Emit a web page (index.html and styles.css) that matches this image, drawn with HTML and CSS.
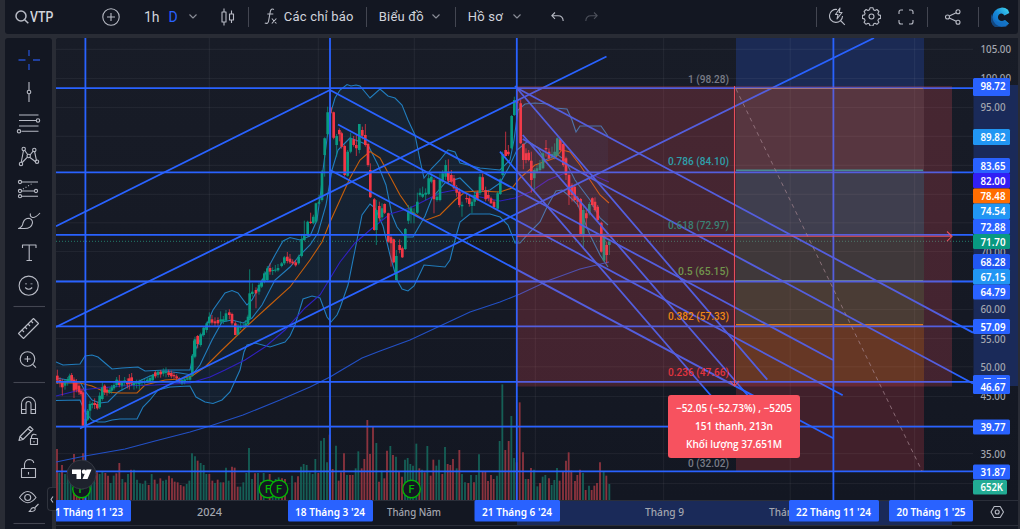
FILE: index.html
```html
<!DOCTYPE html>
<html lang="vi">
<head>
<meta charset="utf-8">
<title>VTP</title>
<link rel="stylesheet" href="styles.css">
</head>
<body>
<div class="app">
  <header class="topbar">
    <div class="symbol">
      <svg class="ic" width="14" height="14" viewBox="0 0 14 14"><circle cx="6" cy="6" r="5"/><path d="M9.7 9.700l3.600 3.600"/></svg>
      <span class="ticker">VTP</span>
    </div>
    <svg class="ic add" width="18" height="18" viewBox="0 0 18 18"><circle cx="9" cy="9" r="8.200"/><path d="M9 5v8M5 9h8"/></svg>
    <span class="interval">1h</span><span class="interval on">D</span>
    <svg class="ic chev c1" width="8" height="5" viewBox="0 0 8 5"><path d="M.5.5 4 4 7.500.5"/></svg>
    <svg class="ic candles" width="14" height="18" viewBox="0 0 14 18"><path d="M1 4h4v10H1zM3 4V0.500M3 14v3.500M8.500 6h4v6h-4zM10.500 6V2.500M10.500 12v3"/></svg>
    <i class="sep"></i>
    <svg class="ic fx" width="13" height="17" viewBox="0 0 13 17"><path d="M10 1.500Q7 0 6.300 3.500L4.600 13Q4 16.300.8 15M3.300 6h6M7.800 10.500l4.600 5M12.400 10.500l-4.600 5"/></svg>
    <span class="label l1">Các chỉ báo</span>
    <i class="sep s2"></i>
    <span class="label l2">Biểu đồ</span>
    <svg class="ic chev c2" width="8" height="5" viewBox="0 0 8 5"><path d="M.5.5 4 4 7.500.5"/></svg>
    <i class="sep s3"></i>
    <span class="label l3">Hồ sơ</span>
    <svg class="ic chev c3" width="8" height="5" viewBox="0 0 8 5"><path d="M.5.5 4 4 7.500.5"/></svg>
    <svg class="ic undo" width="13" height="10" viewBox="0 0 13 10"><path d="M4 .5.800 3.700 4 6.900M1 3.700h6q5 0 5.200 5.300"/></svg>
    <svg class="ic redo" width="13" height="10" viewBox="0 0 13 10"><path d="M9 .5l3.200 3.200L9 6.900M12 3.700H6Q1 3.700.8 9"/></svg>
    <div class="right">
      <i class="sep"></i>
      <svg class="ic r1" width="17" height="19" viewBox="0 0 17 19"><path d="M8 2.500A6.500 6.500 0 1 0 13.500 9M11.500 13.500l4.300 4.300M11 1 6.500 7.500H9L8 12l5-6.500h-2.800z"/></svg>
      <svg class="ic r2" width="19" height="19" viewBox="0 0 19 19"><circle cx="9.500" cy="9.500" r="2.500"/><path d="M8 .8h3l.5 2 1.500.7 1.900-1 2 2-1 1.900.7 1.500 2 .5v3l-2 .5-.7 1.500 1 1.900-2 2-1.900-1-1.500.7-.5 2H8l-.5-2-1.500-.7-1.900 1-2-2 1-1.900-.7-1.500-2-.5v-3l2-.5.7-1.500-1-1.900 2-2 1.900 1 1.500-.7z"/></svg>
      <svg class="ic r3" width="16" height="16" viewBox="0 0 16 16"><path d="M1 5V3q0-2 2-2h2M11 1h2q2 0 2 2v2M15 11v2q0 2-2 2h-2M5 15H3q-2 0-2-2v-2"/></svg>
      <i class="sep s4"></i>
      <svg class="ic r4" width="16" height="16" viewBox="0 0 16 16"><circle cx="2.500" cy="8" r="2"/><circle cx="13" cy="2.800" r="2"/><circle cx="13" cy="13.200" r="2"/><path d="M4.300 7.100l6.900-3.400M4.300 8.900l6.900 3.400"/></svg>
      <i class="sep s5"></i>
      <svg class="logo" width="19" height="20" viewBox="0 0 19 20"><defs><linearGradient id="lg" x1="0" y1="1" x2="1" y2="0"><stop offset="0" stop-color="#1260b8"/><stop offset=".5" stop-color="#1689d8"/><stop offset="1" stop-color="#43dcf0"/></linearGradient></defs><path d="M17 2.800A9.500 9.500 0 1 0 18 16.500L14 13Q10.500 15.300 7.800 12.800 6 10 8 7.500 11 5.300 13.500 8.500L18.300 6z" fill="url(#lg)"/><path d="M1 7Q2 14 8.500 15l5.500-1.800 3.500 3.800A9.500 9.500 0 0 1 1 7z" fill="#1467bd" opacity=".6"/></svg>
    </div>
  </header>
  <div class="body">
    <nav class="tools">
      <svg viewBox="0 0 47 491" width="47" height="491">
        <g class="cross"><path d="M24 12v6M24 26v6M13.500 22h7M28 22h7"/></g>
        <g class="ic">
          <path d="M24 44v8M24 56v8"/><circle cx="24" cy="54" r="1.800"/>
          <path d="M14 77h19.500M14 82.500h17M14 88h19.500M16.500 93.300h17"/><circle cx="33" cy="82.500" r="1.700"/><circle cx="14" cy="93.300" r="1.700"/>
          <path d="M18.400 113 16.300 124M19.800 112.500l3 4.300M25 117l3.200-3.800M29.500 113.200l2.100 10M17.200 124.500l5-5.200M25 119.500l5.500 4.300"/><circle cx="18.700" cy="111" r="1.700"/><circle cx="29.300" cy="112" r="1.700"/><circle cx="23.700" cy="118" r="1.700"/><circle cx="16" cy="126" r="1.700"/><circle cx="32" cy="123.700" r="1.700"/>
          <path d="M17 144h16M17 153h12M17 158.200h16"/><path d="M18 151l10-6" stroke-dasharray="1 2"/><circle cx="15" cy="144" r="1.600"/><circle cx="15" cy="153" r="1.600"/><circle cx="31" cy="153" r="1.600"/><circle cx="15" cy="158.200" r="1.600"/>
          <path d="M13.500 190.500q4-1.500 4.500-5.500 1.500-4.700 6-4.700 3.500 1 3.500 4.500-1 5.700-8 5.700zM25.500 175.500q-1 3 2 4 3 .5 7.500-4.500"/>
          <path d="M17.500 210v-3h13.500v3M24.200 207v15.500M21.500 222.500h5.500"/>
          <circle cx="23.700" cy="247.700" r="9.600"/><path d="M20.200 249.500q3.500 3.500 7 0"/><path d="M21 245.500v.8M26.500 245.500v.8" stroke-width="2"/>
          <path d="M8.500 268.500h31.500" class="rule"/>
          <path d="M13.500 295.500 28.500 280.500l5 5-15 15zM17 292l2 2M20 289l2 2M23 286l2 2M26 283l2 2"/>
          <circle cx="22.500" cy="321" r="7.300"/><path d="M22.500 318v6M19.500 321h6M27.700 326.300l3.300 3.300"/>
          <path d="M8.500 344.500h31.500" class="rule"/>
          <path d="M16.500 375.500v-9.500a7 7 0 0 1 14 0v9.500h-4.500v-9.500a2.500 2.500 0 0 0-5 0v9.500zM16.500 371.500h4.500M26 371.500h4.500"/>
          <path d="M14 402.500l1-4 10-10 3 3-10 10zM23 390.500l3 3M15 398.500l3 3M25.500 400.500h7v6h-7zM26.500 400.500v-2q1-3.500 5-1.500M29 403v1.500"/>
          <path d="M16.500 430.500h14v9h-14zM19.500 430v-4q1-4.500 5-4.500 4 .5 4.200 3.500M23.500 434v2.500"/>
          <path d="M14.500 459.500q8-12 16.500 0-8 10.500-16.500 0z"/><circle cx="22.700" cy="459.500" r="3"/><path d="M24 473.500q2-1 2.300-3 3-2 4 .5-.5 3-6.300 2.500zM30 469.500l3.500-3.500"/>
          <path d="M8.500 485.500h31.500" class="rule"/>
        </g>
      </svg>
    </nav>
    <main class="chart">
      <svg id="plot" width="962" height="491" viewBox="56 38 962 491">
        <defs>
          <linearGradient id="bg" x1="0" y1="0" x2="0" y2="1"><stop offset="0" stop-color="#181c27"/><stop offset="1" stop-color="#131722"/></linearGradient>
          <clipPath id="pane"><rect x="56" y="38" width="917" height="462"/></clipPath>
        </defs>
        <rect x="56" y="38" width="962" height="462" fill="url(#bg)"/>
        <g clip-path="url(#pane)">
          <g class="zones">
            <rect x="736" y="38" width="188" height="50" fill="#1b2a54"/>
            <rect x="736" y="88" width="188" height="82" fill="#2d3038"/>
            <rect x="736" y="170" width="188" height="65.500" fill="#0f3a4a"/>
            <rect x="736" y="235.500" width="188" height="45" fill="#0f3231"/>
            <rect x="736" y="280.500" width="188" height="44" fill="#1d372a"/>
            <rect x="736" y="324.500" width="188" height="57" fill="#403116"/>
            <rect x="736" y="381.500" width="188" height="90" fill="#41202b"/>
          </g>
          <g id="grid" class="grid"></g>
          <path d="M736 170.300h187" stroke="#1d9a9a" stroke-width="1.500"/><path d="M736 280.500h187" stroke="#5ba356"/><path d="M736 324.800h187" stroke="#d88400" stroke-width="1.600"/>
          <g id="volume" class="volume" transform="scale(.33333)"></g>
          <g id="bands" class="bands"></g>
          <g id="bars" transform="scale(.33333)"></g>
          <path class="last" d="M56 241.300H973"/>
          <g class="draw">
            <path d="M56 88.200H973M56 172.300H973M56 234.800H973M56 281.500H973M56 326.300H973M56 381.800H973M56 426.600H973M56 471.400H973"/>
            <path d="M85.400 38V500M330 38V500M516.800 38V500M833.400 38V500"/>
            <path d="M56 226.300 330 90M56 327 606.500 56.500M80 428.500 874 38"/>
            <path d="M330 90 833 360M338 124.500 842.700 395.300M330 170 833.300 438.300M517 88 973 332.600M522.700 139 591.700 178.500 973 383.500"/>
            <path d="M515 86 767.300 379.700M522.700 135 750 398M500 151.700 713 398"/>
          </g>
          <path d="M736 88.500H923" stroke="#8b818d"/>
          <rect class="range" x="517" y="86" width="435" height="300.500"/>
          <path class="diag" d="M736 89 922 471"/>
          <g class="arrows"><path d="M517 236.300H951M947 231.500l5 4.800-5 4.800M734.500 86V385M730 381l4.500 5 4.500-5"/></g>
          <g class="ev">
            <circle cx="81.500" cy="489" r="8.800"/><circle cx="268" cy="489" r="8.800"/><text x="81.500" y="493">F</text><text x="268" y="493">F</text>
            <circle cx="279" cy="489" r="8.800"/><circle cx="411.500" cy="489" r="8.800"/><text x="279" y="493">F</text><text x="411.500" y="493">F</text>
          </g>
          <circle cx="81.500" cy="474.500" r="14.500" fill="#1e222d" stroke="#353944"/>
          <path d="M72 469.500h9v9.500h-4.500v-5H72zM86.500 469.500h5l-4 9.500h-5z" fill="#fff"/><circle cx="84" cy="471.700" r="2.200" fill="#fff"/>
        </g>
        <g id="fib" class="fib"></g>
        <g class="tip"><rect x="668" y="395" width="132" height="63" rx="3"/>
          <text x="734" y="412" textLength="116" lengthAdjust="spacingAndGlyphs">−52.05 (−52.73%) , −5205</text>
          <text x="734" y="430" textLength="78" lengthAdjust="spacingAndGlyphs">151 thanh, 213n</text>
          <text x="734" y="448" textLength="96" lengthAdjust="spacingAndGlyphs">Khối lượng 37.651M</text></g>
        <rect x="56" y="500" width="962" height="29" fill="#131722"/>
        <rect x="517" y="501" width="435" height="24" fill="#1a2a59"/>
        <rect x="973.500" y="85" width="44.500" height="301" fill="#1a2a59"/>
        <path d="M56 500.500H1018M56 525.500H1018" stroke="#2a2e39"/>
        <g id="axes" class="axes"></g>
        <g class="ic"><path d="M991 512l3.200-5.500h6l3.300 5.500-3.300 5.500h-6z"/><circle cx="997.200" cy="512" r="2"/></g>
      </svg>
    </main>
    <div class="collapse"><svg class="ic" width="4" height="7" viewBox="0 0 4 7"><path d="M3 .5 1 3.500l2 3"/></svg></div>
  </div>
</div>
<script src="chart.js"></script>
</body>
</html>
```

FILE: styles.css
```css
* { box-sizing: border-box; }
body { margin: 0; background: #292c35; font-family: Roboto, "Open Sans", sans-serif; overflow: hidden; }
.app { width: 1020px; height: 529px; padding: 0 2px 0 5px; display: flex; flex-direction: column; gap: 4px; }
.topbar { height: 34px; flex: none; background: #131722; border-radius: 0 0 3px 3px; display: flex; align-items: center; padding: 0 8px 1px 10px; color: #d1d4dc; font-size: 13px; }
.topbar svg { flex: none; }
.ic { fill: none; stroke: #b8bbc5; stroke-width: 1.1; stroke-linejoin: round; }
.symbol { display: flex; align-items: center; gap: 1px; width: 87px; }
.symbol .ic { stroke-width: 1.5; }
.ticker { font-size: 14px; font-weight: 500; transform: scaleX(.88); transform-origin: left; }
.interval { margin-left: 24px; font-size: 14px; line-height: 16px; }
.interval + .interval { margin-left: 9px; }
.on { color: #2962ff; }
.chev { stroke: #8b8e98; }
.c1 { margin-left: 11px; }
.candles { margin-left: 24px; }
.sep { width: 1px; height: 20px; background: #434651; flex: none; margin-left: 13px; }
.fx { margin-left: 15px; }
.label { white-space: nowrap; font-size: 13px; letter-spacing: .2px; line-height: 18px; }
.l1 { width: 70px; margin-left: 7px; }
.l2 { width: 45px; margin-left: 12px; }
.l3 { width: 36px; margin-left: 12px; }
.s2 { margin-left: 12px; }
.c2 { margin-left: 8px; }
.c3 { margin-left: 9px; }
.s3 { margin-left: 15px; }
.undo { margin-left: 30px; }
.redo { margin-left: 21px; opacity: .35; }
.right { margin-left: auto; display: flex; align-items: center; }
.r1 { margin-left: 12px; }
.r2 { margin-left: 16px; }
.r3 { margin-left: 17px; }
.r4 { margin-left: 17px; }
.s5 { margin-left: 17px; }
.logo { margin-left: 12px; }
.body { flex: 1; display: flex; gap: 4px; position: relative; min-height: 0; }
.tools { width: 47px; background: #131722; border-radius: 3px 3px 0 0; flex: none; }
.tools svg, .chart svg { display: block; }
.cross { stroke: #20409f; stroke-width: 1.8; }
.rule { stroke: #434651; }
.chart { width: 962px; flex: none; background: #131722; border-radius: 3px 0 0 0; overflow: hidden; }
.collapse { position: absolute; left: 42px; top: 449px; width: 9px; height: 24px; border-radius: 4px 0 0 4px; background: #131722; border: 1px solid #2f333d; border-right: 0; display: flex; align-items: center; padding-left: 2px; }
.grid { stroke: #fff; stroke-opacity: .06; }
.volume { stroke-width: 5.5; fill: none; }
.bands { fill: none; stroke-width: 1.1; }
.last { stroke: #26957f; stroke-dasharray: 1 2; opacity: .8; }
.draw { fill: none; stroke: #2962ff; stroke-width: 1.8; }
.range { fill: #f7525f; fill-opacity: .21; }
.diag { stroke: #a78791; stroke-opacity: .7; stroke-dasharray: 4 4; }
.arrows { fill: none; stroke: #f7525f; stroke-width: 1.1; opacity: .9; }
.ev circle { fill: #131722; stroke: #04b404; stroke-width: 1.4; }
.ev text { fill: #04b404; font: 500 11px Roboto, sans-serif; text-anchor: middle; }
.fib text { font: 500 11.5px Roboto, sans-serif; text-anchor: end; }
.tip rect { fill: #f7525f; }
.tip text { fill: #fff; font: 600 11px "Open Sans", Roboto, sans-serif; text-anchor: middle; }
.axes text { font: 500 11.5px "Noto Sans", Roboto, sans-serif; fill: #a3a6af; }
.axes .tag { fill: #fff; font-weight: 600; }
```

FILE: chart.js
```js
const $ = id => document.getElementById(id);
const UP = '#089981', DOWN = '#f23645';

let g = '';
[49.3,78.4,107.4,136.3,165.3,194.3,222.8,251.4,280.5,309.4,338.4,366.8,396.4,425.4,453.7,483.4].forEach(y => g += `<path d="M56 ${y}H973"/>`);
[209.3,318.3,414.3,535.3,663.7,790.2,914.7].forEach(x => g += `<path d="M${x} 38V500"/>`);
$('grid').innerHTML = g;

// volume columns: x:top with side flag, in thirds of a pixel
const vol = [[0, `171:300r 178:372g 186:348r 195:375g 203:380g 212:375g 222:315r 230:380r 238:375r 249:313r 257:340g 266:365g 274:370g 283:372g 291:370r 299:375g 307:368g 316:372r 324:380r 332:402g 341:380g 349:373r 358:342r 367:390g 376:400r 384:375g 393:362r 402:362g 411:392g 420:403g 428:405g 436:395g 446:408r 455:375g 464:392r 472:405g 481:388r 489:395g 498:392g 507:380r 516:388r 524:398r 533:400r 542:408r 551:412r 560:405g 568:395g 576:313g 585:322g 593:335r 602:342g 611:348g 619:375g 628:375r 637:395r 645:402g 653:392r 662:400g 670:400r 678:356g 686:395g 696:353r 704:356r 713:413r 721:413g 730:400g 739:372g 747:297g 756:390g 765:373r 774:372g 783:400r 791:372g 809:375r 818:400g 827:390g 836:385g 846:388r 855:390r 876:380g 886:400r 894:382r 903:353g 911:345g 920:348g 929:370g 938:375g 946:330g 955:372r 963:275g 972:267g 981:340g 989:257r 998:360r 1008:290g 1016:395r`],
[1020, `3:370r 12:313r 21:378g 30:378r 38:378r 47:358g 55:307g 65:358r 73:330r 82:213r 90:315r 99:233r 109:282g 117:398r 125:365g 133:388r 141:305r 151:291g 159:318r 168:323g 177:367r 186:383r 195:332g 203:327g 211:345g 219:350g 229:284g 238:358r 246:362g 254:370r 262:291g 272:380r 280:332r 289:350g 297:332g 307:375r 315:294g 323:345r 331:348r 339:330r 350:358g 358:303r 366:375g 375:400g 385:402r 393:378g 402:400r 409:378g 417:316g 428:367r 436:367r 444:396r 453:378r 461:390r 471:380g 479:276g 487:106g 496:303r 506:276r 514:201g 522:327g 530:340r 539:160r 549:310r 557:390g 565:390r 573:357r 582:362g 592:412g 600:402r 608:383g 616:378g 627:388r 635:408g 643:393g 651:357g 659:395r 669:367r 678:335r 686:310r 694:365r 705:396r 712:378r 720:362r 729:372g 737:423r 747:410g 755:423r 763:410r 771:402r 780:340r 791:367g 799:380r 808:405g`]];
g = '';
vol.forEach(([dx, s]) => s.split(' ').forEach(b => {
  const [x, t] = b.split(':');
  g += `<path d="M${+x + dx} ${parseInt(t) + 1047}V1500" stroke="${t.endsWith('r') ? '#8b333e' : '#155f56'}"/>`;
}));
$('volume').innerHTML = g;

const upper = '56,362 63,365 80,364 85,356 92,355 98,357 105,363 112,369 122,368 138,367 145,371 165,370 180,370 190,370 193,355 200,340 213,310 225,293 232,290.5 238,293 247,305 252,300 260,285 268,268 275,255 283,241 290,237.500 300,240 310,236 317,220 321,190 323,170 330,115 335,98 340,90 347,84.500 351,86 356,85 360,86 370,98 380,89 388,96 395,98 402,105 408,120 415,135 420,160 424,178 432,168 440,160 448,150 455,152 460,163 480,168 500,170 510,160 514,140 518,110 525,104 535,103 548,104 555,108 567,109 572,120 576,132 580,126 601,126 608,136';
const lower = '56,400.5 80,400 85,412 92,420 98,422 105,422 112,420 120,419 137,419 143,407 150,400 158,390 170,387 190,386 196,397 205,402 213,403.500 222,400 230,392 240,370 244,352 247,345 255,343 270,347 285,342 290,336 295,325 303,299 312,296 320,298 327,317 331,322 337,315 340,308 348,285 355,250 362,215 370,204 375,208 383,226 390,255 397,280 402,289 408,291 414,286 424,265 445,267 450,260 455,240 460,222 470,214 490,214 500,217 508,225 515,243 520,243 530,232 540,222 548,205 556,191 562,190 568,195 578,205 590,235 600,255 608,267';
const basis = '56,378 80,382 85,391 92,400 100,403 108,402 118,392 135,383 150,376 165,371 180,373 192,375 200,365 212,340 222,322 232,320 243,323 252,318 262,305 275,280 290,267 300,255 310,245 318,233 326,205 332,170 338,150 345,143 350,138 358,141 368,145 378,165 386,185 392,215 397,227 405,237 413,237 425,216 432,198 445,183 460,178 475,193 490,190 500,183 510,165 517,150 528,141 538,148 545,160 558,155 565,160 575,180 590,200 600,218 608,225';
const orange = '56,383 80,383 92,386 105,392 120,393 137,393 145,385 165,380 180,379 192,376 205,367 222,350 247,326 270,305 290,287 310,260 322,242 330,222 340,200 350,178 360,160 370,151.5 380,158 392,180 400,195 412,212 425,220.5 440,215 455,200 465,192 478,191 500,192 512,188 520,178 535,165 555,158 562,150 570,152 580,165 590,180 600,195 609,203';
const violet = '56,396 80,390 120,386 155,385 190,383 210,377 225,370 245,360 265,347 285,330 305,308 320,295 340,262 355,243 370,230 390,214 410,208 440,193 455,190 470,195 500,201 515,198 530,192 548,180 570,171 590,174 609,182';
const slow = '56,462 85,456 125,449 155,441 190,432 210,426 243,415 280,400 310,387 330,377 340,371 362,358 380,351 410,340 440,326 470,312 500,302 520,294 550,280 580,269 609,262';
const line = (p, c) => `<polyline points="${p}" stroke="${c}"/>`;
$('bands').innerHTML = `<polygon points="${upper} ${lower.split(' ').reverse().join(' ')}" fill="#2196f3" fill-opacity=".065"/>` +
  line(upper, '#217dbd') + line(lower, '#217dbd') + line(basis, '#217dbd') + line(orange, '#c65e0b') + line(violet, '#3020c0') + line(slow, '#2350c5');

// candles: x body-top body-bottom high low side, in thirds of a pixel
const bars = [[0,1047,`172 80 95 62 105 r,180 93 100 85 115 r,187 98 115 90 140 r,195 95 110 90 122 g,203 90 98 84 110 g,209 80 95 74 100 g,215 78 95 72 100 r,222 92 125 85 147 r,229 100 122 90 130 r,237 110 130 102 138 r,243 125 135 118 140 r,249 130 230 118 234 r,257 210 228 200 230 g,263 185 212 180 216 g,270 165 185 155 205 g,277 163 168 158 178 g,284 162 168 148 180 r,292 165 178 158 182 r,299 140 175 130 180 g,307 115 150 100 155 g,314 110 130 106 138 r,321 122 130 115 140 r,328 123 130 116 135 g,335 115 125 108 134 g,342 108 118 100 124 g,350 92 108 84 115 g,358 95 108 78 115 r,366 100 110 94 125 g,374 94 100 84 110 g,382 98 106 88 118 r,388 88 105 75 122 r,395 85 103 72 110 r,402 102 108 96 122 g,410 98 104 92 118 g,418 98 106 92 122 g,426 98 102 90 110 g,434 97 101 90 106 g,442 92 100 86 102 g,450 87 98 80 100 g,458 78 94 75 97 g,466 70 82 65 88 r,474 68 78 63 86 g,482 68 76 63 86 r,490 67 74 58 82 g,498 68 72 55 85 g,506 70 78 62 84 r,514 72 82 65 88 r,522 78 82 70 90 r,530 82 88 76 95 r,538 88 96 85 102 r,546 92 103 88 108 g,554 91 98 84 106 g,562 88 92 80 94 g,570 83 92 78 95 g,577 20 80 15 83 g,583 -25 20 -30 25 g`],
[0,540,`585 478 530 470 535 g,593 468 492 465 505 r,602 463 495 458 500 g,611 443 465 438 470 g,620 430 450 425 458 g,628 410 430 397 440 g,636 418 428 405 434 r,645 424 430 412 438 r,654 420 430 412 440 r,662 418 425 394 432 g,670 418 424 408 432 g,678 400 422 390 426 g,688 397 405 388 418 r,696 402 430 398 436 r,706 430 465 424 466 r,714 440 464 432 466 g,722 438 444 424 450 g,730 438 442 430 444 g,737 430 440 420 444 g,744 410 432 404 436 g,749 340 415 268 420 g,757 335 342 310 350 g,768 330 340 322 385 r,777 315 335 308 344 g,785 305 320 298 324 g,793 280 305 274 310 g,802 265 300 258 305 g,810 264 275 250 284 r,818 270 273 262 285 g,826 269 272 255 277 g,834 264 271 252 275 g,845 250 258 246 262 g,853 232 250 228 255 g,862 230 243 216 250 r,870 236 247 222 252 r,878 245 250 238 255 r,887 247 256 240 260 r,896 230 250 224 254 g,905 178 228 165 232 g,913 165 180 122 184 g,923 125 168 122 170 g,932 125 129 98 132 r,940 110 130 104 133 g,948 70 125 68 130 g`],
[0,0,`957 605 611 585 613 g,966 515 600 510 605 g,974 415 465 412 530 g,983 337 403 320 408 g,991 322 340 265 450 r,1001 337 413 335 418 r,1010 408 435 402 470 g,1018 390 403 385 424 r`],
[1020,0,`5 400 440 395 446 r,14 438 525 434 530 r,23 455 527 450 530 g,32 415 455 398 460 g,41 418 435 408 440 r,49 435 445 405 468 r,58 372 450 372 460 g,67 390 407 380 418 r,76 405 435 372 440 r,84 432 495 428 500 r,91 510 592 490 594 r,103 598 690 594 692 r,109 630 690 600 735 g,118 618 655 605 665 r,126 625 652 610 660 g,134 612 638 610 642 r,145 640 725 638 728 r,153 712 730 705 800 r,161 718 787 716 790 r,169 768 840 750 842 g,179 735 750 718 760 r,187 745 772 740 774 r,196 687 747 684 750 g,205 632 662 615 672 g,213 625 642 618 670 g,222 638 642 625 670 g,232 605 638 578 642 g,240 578 585 565 590 g,248 582 590 560 594 g,257 578 584 565 600 g,266 535 582 520 585 g,274 530 545 520 550 g,282 540 598 535 640 r,291 590 600 575 605 g,300 540 600 520 604 g,308 520 545 510 550 g,317 495 530 480 540 g,325 515 542 478 550 r,334 525 545 510 550 r,342 535 565 525 568 r,350 562 578 555 590 r,358 575 615 565 622 r,366 614 619 605 650 g,380 594 598 580 608 r,388 595 612 588 620 r,396 605 618 595 640 g,404 585 605 575 618 g,412 578 598 572 602 r,420 530 578 522 585 g,428 532 570 520 575 r,437 570 598 560 604 r,445 585 595 570 604 r,453 595 610 590 612 r,462 605 622 600 626 r,473 580 626 575 628 g,481 538 582 535 585 g,488 463 525 455 530 g,497 450 468 395 470 r,505 455 463 435 468 r,515 348 445 345 448 g,523 300 345 290 348 g,531 303 310 265 350 r,542 310 430 300 432 r,550 432 480 430 508 r,558 460 480 445 490 r,566 458 480 450 484 r,574 482 540 455 578 r,583 510 535 505 575 g,591 505 515 495 520 g,600 490 510 480 518 g,609 460 505 455 508 g,618 444 448 420 470 r,627 455 475 445 478 r,636 462 470 440 476 g,644 455 472 430 478 g,652 415 465 412 468 g,661 418 450 414 455 r,670 432 495 428 500 r,678 475 525 470 540 r,687 525 585 520 615 r,696 555 585 550 605 r,704 560 600 555 604 r,713 593 605 588 620 r,722 597 705 594 708 r,730 630 705 615 742 g,739 640 655 628 680 r,748 612 640 606 646 g,757 595 615 592 620 r,765 605 630 592 635 r,773 620 660 615 665 r,784 668 755 665 758 r,792 710 782 700 785 g,800 735 765 725 790 r,808 725 735 720 765 g`]];
g = '';
bars.forEach(([dx, dy, s]) => s.split(',').forEach(b => {
  const [x, t, u, h, l, k] = b.split(' ');
  const c = k === 'g' ? UP : DOWN, X = +x + dx;
  g += `<path d="M${X} ${+h + dy}V${+l + dy}" stroke="${c}" stroke-opacity=".75" stroke-width="3"/><path d="M${X} ${+t + dy}V${+u + dy}" stroke="${c}" stroke-width="8"/>`;
}));
$('bars').innerHTML = g;

$('fib').innerHTML = [['1 (98.28)', 83, 41, '#787b86'], ['0.786 (84.10)', 164.5, 61, '#2f9fab'], ['0.618 (72.97)', 229, 61, '#3a8074'], ['0.5 (65.15)', 274.5, 51, '#71944d'], ['0.382 (57.33)', 319.5, 61, '#ed8615'], ['0.236 (47.66)', 376, 61, '#e2343f'], ['0 (32.02)', 466.5, 41, '#787b86']]
  .map(([t, y, w, c]) => `<text x="729" y="${y}" textLength="${w}" lengthAdjust="spacingAndGlyphs" fill="${c}">${t}</text>`).join('');

g = '';
const txt = (t, x, y, w, k = '') => `<text class="${k}" x="${x}" y="${y}" textLength="${w}" lengthAdjust="spacingAndGlyphs">${t}</text>`;
[['105.00',53.4],['100.00',82],['95.00',111],['70.00',255.5],['60.00',313.2],['55.00',342.5],['50.00',371],['45.00',400],['35.00',458]].forEach(([t, y]) => g += txt(t, 980.5, y, t.length > 5 ? 30.5 : 25));
[['98.72',78,96,'#2962ff'],['89.82',129,145,'#2196f3'],['83.65',158,173,'#2962ff'],['82.00',173,188,'#311ff5'],['78.48',188.5,203.5,'#ff6d00'],['74.54',203.5,219,'#2196f3'],['72.88',219,234,'#2962ff'],['71.70',234,249,'#089981'],['68.28',254,269,'#2157f3'],['67.15',269,284.5,'#2196f3'],['64.79',284.5,299.5,'#2962ff'],['57.09',319,334,'#2962ff'],['46.67',375,394,'#2962ff'],['39.77',419.5,434.5,'#2962ff'],['31.87',464.5,479.5,'#2962ff'],['652K',480,494.5,'#22ab94']]
  .forEach(([t, a, b, c]) => g += `<rect x="973" y="${a}" width="${t === '652K' ? 34 : 37}" height="${b - a}" rx="1.5" fill="${c}"/>` + txt(t, 980.5, ({'46.67': 387, '98.72': 86}[t] || (a + b) / 2) + 4, t === '652K' ? 22.5 : 25, 'tag'));
g += '<path d="M984 378.500h7M997 378.500h9" stroke="#c9d5fb"/>';
[['2024',197,25],['Tháng Năm',387,54],['Tháng 9',645,39],['Thán',769,24]].forEach(([t, x, w]) => g += txt(t, x, 516, w, t === '2024' ? 'year' : ''));
[["1 Tháng 11 '23",55,55.5,131,68],["18 Tháng 3 '24",295,288,373,70],["21 Tháng 6 '24",482,474.5,560,70],["22 Tháng 11 '24",796,789,879,75],["20 Tháng 1 '25",896.5,889,973,69]].forEach(([t, x, a, b, w]) => g += `<rect x="${a}" y="500" width="${b - a}" height="21.500" rx="1.5" fill="#2962ff"/>` + txt(t, x, 516, w, 'tag'));
$('axes').innerHTML = g;
```
